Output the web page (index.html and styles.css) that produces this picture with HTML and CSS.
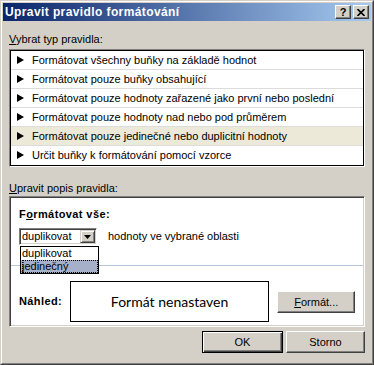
FILE: index.html
```html
<!DOCTYPE html>
<html lang="cs">
<head>
  <meta charset="UTF-8">
  <title>Upravit pravidlo formátování</title>
  <link rel="stylesheet" href="styles.css">
</head>
<body>
  <div class="window">
    <div class="frame">
      <div class="titlebar">
        <span class="title">Upravit pravidlo formátování</span>
        <div class="caption">
          <span class="cap-btn help">?</span>
          <span class="cap-btn">
            <svg width="8" height="7" viewBox="0 0 8 7"><path d="M0.5 0 L7.5 7 M7.5 0 L0.5 7" stroke="#000" stroke-width="1.6"/></svg>
          </span>
        </div>
      </div>

      <div class="content">
        <div class="group-label"><u>V</u>ybrat typ pravidla:</div>
        <ul class="rules">
          <li>Formátovat všechny buňky na základě hodnot</li>
          <li>Formátovat pouze buňky obsahující</li>
          <li>Formátovat pouze hodnoty zařazené jako první nebo poslední</li>
          <li>Formátovat pouze hodnoty nad nebo pod průměrem</li>
          <li class="active">Formátovat pouze jedinečné nebo duplicitní hodnoty</li>
          <li>Určit buňky k formátování pomocí vzorce</li>
        </ul>

        <div class="group-label second"><u>U</u>pravit popis pravidla:</div>
        <div class="panel">
          <div class="heading">F<u>o</u>rmátovat vše:</div>
          <div class="select-row">
            <div class="combo">
              <span>duplikovat</span>
              <span class="combo-btn">
                <svg width="7" height="4" viewBox="0 0 7 4"><path d="M0 0h7L3.5 4z" fill="#000"/></svg>
              </span>
              <ul class="dropdown">
                <li>duplikovat</li>
                <li class="selected"><span>jedinečný</span></li>
              </ul>
            </div>
            <span>hodnoty ve vybrané oblasti</span>
          </div>
          <hr class="sep">
          <div class="preview-row">
            <span class="preview-label">Náhled:</span>
            <div class="preview">Formát nenastaven</div>
            <button class="btn format-btn"><u>F</u>ormát...</button>
          </div>
        </div>

        <div class="actions">
          <button class="btn default">OK</button>
          <button class="btn cancel">Storno</button>
        </div>
      </div>
    </div>
  </div>
</body>
</html>
```

FILE: styles.css
```css
body {
  margin: 0;
  font-family: "Liberation Sans", Arial, sans-serif;
  font-size: 11px;
  line-height: 13px;
  color: #000;
}
.window {
  width: 374px;
  height: 365px;
  box-sizing: border-box;
  border: 1px solid;
  border-color: #d4d0c8 #404040 #404040 #d4d0c8;
  background: #d4d0c8;
}
.frame {
  height: 100%;
  box-sizing: border-box;
  border: 1px solid;
  border-color: #fff #808080 #808080 #fff;
  padding: 1px;
}
.titlebar {
  height: 18px;
  display: flex;
  align-items: center;
  justify-content: space-between;
  padding: 0 2px;
  background: linear-gradient(to right, #0a246a, #a6caf0);
}
.title {
  color: #fff;
  font-weight: bold;
  font-size: 12px;
  letter-spacing: 0.4px;
}
.caption {
  display: flex;
  gap: 2px;
}
.cap-btn {
  width: 16px;
  height: 14px;
  box-sizing: border-box;
  display: flex;
  align-items: center;
  justify-content: center;
  background: #d4d0c8;
  border: 1px solid;
  border-color: #fff #404040 #404040 #fff;
  box-shadow: inset -1px -1px #808080;
}
.cap-btn.help {
  font-weight: bold;
  font-size: 11px;
}
.content {
  padding: 12px 6px 0;
}
.group-label {
  margin-bottom: 3px;
}
.group-label.second {
  margin-top: 15px;
  margin-bottom: 1px;
}
.rules {
  list-style: none;
  margin: 0;
  padding: 1px 1px 2px;
  background: #fff;
  border: 1px solid;
  border-color: #808080 #fff #fff #808080;
  box-shadow: inset 0 0 0 1px #000;
}
.rules li {
  height: 18px;
  display: flex;
  align-items: center;
  padding-left: 6px;
  border-bottom: 1px solid #dcdcdc;
}
.rules li:last-child {
  border-bottom: 0;
}
.rules li::before {
  content: "";
  border-left: 7px solid #000;
  border-top: 4px solid transparent;
  border-bottom: 4px solid transparent;
  margin-right: 8px;
}
.rules li.active {
  background: #ece9d8;
}
.panel {
  background: #fff;
  border: 1px solid;
  border-color: #808080 #fff #fff #808080;
  box-shadow: inset 1px 1px #404040, inset -1px -1px #d4d0c8;
  padding: 11px 9px 4px;
}
.heading {
  font-weight: bold;
  letter-spacing: 0.4px;
}
.select-row {
  display: flex;
  align-items: center;
  gap: 11px;
  margin-top: 7px;
}
.combo {
  position: relative;
  width: 78px;
  height: 17px;
  box-sizing: border-box;
  display: flex;
  align-items: center;
  justify-content: space-between;
  padding: 0 1px 0 2px;
  border: 1px solid;
  border-color: #808080 #fff #fff #808080;
  box-shadow: inset 1px 1px #404040, inset -1px -1px #d4d0c8;
}
.combo-btn {
  width: 15px;
  height: 13px;
  box-sizing: border-box;
  display: flex;
  align-items: center;
  justify-content: center;
  background: #d4d0c8;
  border: 1px solid;
  border-color: #d4d0c8 #404040 #404040 #d4d0c8;
  box-shadow: inset 1px 1px #fff, inset -1px -1px #808080;
}
.dropdown {
  position: absolute;
  top: calc(100% + 2px);
  left: 0;
  width: 79px;
  box-sizing: border-box;
  list-style: none;
  margin: 0;
  padding: 0;
  background: #fff;
  border: 1px solid #000;
}
.dropdown li {
  height: 13px;
  padding-left: 1px;
}
.dropdown li.selected {
  background: #a7b0c9;
}
.dropdown li.selected span {
  display: block;
  height: 13px;
  box-sizing: border-box;
  outline: 1px dotted #000;
  outline-offset: -1px;
}
.sep {
  border: 0;
  border-top: 1px solid #b7c4dc;
  margin: 20px -8px 0;
}
.preview-row {
  display: flex;
  align-items: center;
  margin-top: 15px;
}
.preview-label {
  width: 51px;
  font-weight: bold;
  letter-spacing: 0.4px;
}
.preview {
  width: 201px;
  height: 41px;
  box-sizing: border-box;
  border: 1px solid #000;
  display: flex;
  align-items: center;
  justify-content: center;
  font-family: Lato, "Liberation Sans", sans-serif;
  font-size: 14px;
}
.btn {
  height: 22px;
  padding: 0;
  font-family: "Liberation Sans", Arial, sans-serif;
  font-size: 11px;
  color: #000;
  background: #d4d0c8;
  border: 1px solid;
  border-color: #fff #404040 #404040 #fff;
  box-shadow: inset -1px -1px #808080, inset 1px 1px #d4d0c8;
}
.format-btn {
  width: 78px;
  margin-left: 8px;
}
.actions {
  display: flex;
  justify-content: flex-end;
  gap: 3px;
  margin-top: 4px;
}
.btn.default {
  width: 81px;
  border-color: #000;
  box-shadow: inset 1px 1px #fff, inset -1px -1px #404040, inset -2px -2px #808080;
}
.btn.cancel {
  width: 79px;
}
```
